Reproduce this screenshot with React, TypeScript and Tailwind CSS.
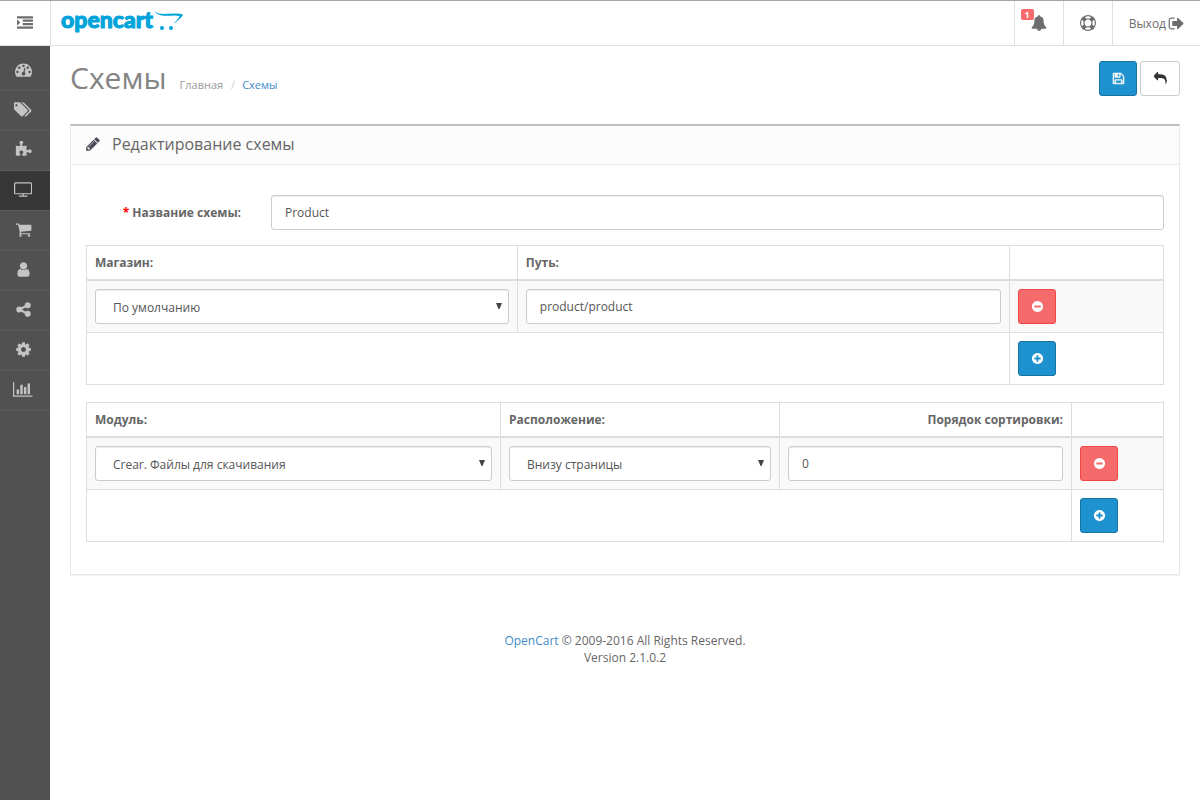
import type { ReactNode } from 'react';

interface IconProps {
  d: string;
  width?: number;
  className?: string;
}

// 14px grid icons, 1792 units to the em
function Icon({ d, width = 1792, className = '' }: IconProps) {
  return (
    <svg viewBox={`0 0 ${width} 1792`} className={`inline-block shrink-0 ${className}`} fill="currentColor" aria-hidden="true">
      <path d={d} />
    </svg>
  );
}

const icons = {
  indent:
    'M352 832q0 14-9 23l-288 288q-9 9-23 9-13 0-22.5-9.500t-9.500-22.500v-576q0-13 9.500-22.500t22.500-9.500q14 0 23 9l288 288q9 9 9 23zM1792 1312v192q0 13-9.500 22.500t-22.500 9.500h-1728q-13 0-22.500-9.500t-9.500-22.500v-192q0-13 9.500-22.500t22.500-9.500h1728q13 0 22.500 9.500t9.500 22.500zM1792 928v192q0 13-9.500 22.500t-22.500 9.500h-1088q-13 0-22.500-9.500t-9.500-22.500v-192q0-13 9.500-22.500t22.500-9.500h1088q13 0 22.500 9.500t9.500 22.500zM1792 544v192q0 13-9.500 22.500t-22.500 9.500h-1088q-13 0-22.500-9.500t-9.500-22.500v-192q0-13 9.500-22.500t22.500-9.500h1088q13 0 22.500 9.500t9.500 22.500zM1792 160v192q0 13-9.500 22.500t-22.500 9.500h-1728q-13 0-22.500-9.500t-9.500-22.500v-192q0-13 9.500-22.500t22.500-9.500h1728q13 0 22.500 9.500t9.500 22.500z',
  dashboard:
    'M384 1152q0-53-37.500-90.500t-90.500-37.500-90.500 37.500-37.500 90.500 37.500 90.500 90.500 37.500 90.500-37.500 37.500-90.500zm192-448q0-53-37.500-90.500t-90.500-37.500-90.500 37.500-37.500 90.500 37.500 90.500 90.500 37.500 90.500-37.500 37.500-90.500zm428 481l101-382q6-26-7.500-48.500t-38.500-29.500-48 6.500-30 39.500l-101 382q-60 5-107 43.500t-63 98.500q-20 77 20 146t117 89 146-20 89-117q16-60-6-117t-72-91zm660-33q0-53-37.500-90.500t-90.500-37.500-90.500 37.500-37.500 90.500 37.500 90.500 90.500 37.500 90.500-37.500 37.500-90.500zm-640-640q0-53-37.500-90.500t-90.500-37.500-90.500 37.500-37.500 90.500 37.500 90.500 90.500 37.500 90.500-37.500 37.500-90.500zm448 192q0-53-37.500-90.500t-90.500-37.500-90.500 37.500-37.500 90.500 37.500 90.500 90.500 37.500 90.500-37.500 37.500-90.500zm320 448q0 261-141 483-19 29-54 29h-1402q-35 0-54-29-141-221-141-483 0-182 71-348t191-286 286-191 348-71 348 71 286 191 191 286 71 348z',
  tags:
    'M384 448q0-53-37.500-90.500t-90.500-37.500-90.500 37.500-37.500 90.500 37.500 90.500 90.500 37.500 90.500-37.500 37.500-90.500zm1067 576q0 53-37 90l-491 492q-39 37-91 37-53 0-90-37l-715-716q-38-37-64.500-101t-26.500-117v-416q0-52 38-90t90-38h416q53 0 117 26.500t102 64.500l715 714q37 39 37 91zm384 0q0 53-37 90l-491 492q-39 37-91 37-36 0-59-14t-53-45l470-470q37-37 37-90 0-52-37-91l-715-714q-38-38-102-64.500t-117-26.500h224q53 0 117 26.500t102 64.500l715 714q37 39 37 91z',
  puzzle:
    'M1755 1083q0 81-44.500 135t-123.500 54q-41 0-77.500-17.500t-59-38-56.500-38-71-17.500q-110 0-110 124 0 39 16 115t15 115v5q-22 0-33 1-34 3-97.500 11.500t-115.500 13.500-98 5q-61 0-103-26.500t-42-83.500q0-37 17.500-71t38-56.500 38-59 17.500-77.500q0-79-54-123.500t-135-44.500q-84 0-143 45.500t-59 127.500q0 43 15 83t33.500 64.500 33.500 53 15 50.500q0 45-46 89-37 35-117 35-95 0-245-24-9-2-27.500-4t-27.500-4l-13-2q-1 0-3-1-2 0-2-1v-1024q2 1 17.500 3.500t34 5 21.500 3.500q150 24 245 24 80 0 117-35 46-44 46-89 0-22-15-50.500t-33.500-53-33.500-64.500-15-83q0-82 59-127.500t144-45.500q80 0 134 44.500t54 123.500q0 41-17.500 77.500t-38 59-38 56.500-17.500 71q0 57 42 83.500t103 26.500q64 0 180-15t163-17v2q-1 2-3.500 17.500t-5 34-3.500 21.500q-24 150-24 245 0 80 35 117 44 46 89 46 22 0 50.500-15t53-33.500 64.500-33.500 83-15q82 0 127.500 59t45.500 143z',
  television:
    'M1792 1248v-960q0-13-9.500-22.500t-22.500-9.500h-1600q-13 0-22.500 9.500t-9.500 22.500v960q0 13 9.500 22.500t22.500 9.500h1600q13 0 22.500-9.500t9.500-22.500zm128-960v960q0 66-47 113t-113 47h-736v128h352q14 0 23 9t9 23v64q0 14-9 23t-23 9h-832q-14 0-23-9t-9-23v-64q0-14 9-23t23-9h352v-128h-736q-66 0-113-47t-47-113v-960q0-66 47-113t113-47h1600q66 0 113 47t47 113z',
  cart:
    'M704 1536q0 52-38 90t-90 38-90-38-38-90 38-90 90-38 90 38 38 90zm896 0q0 52-38 90t-90 38-90-38-38-90 38-90 90-38 90 38 38 90zm128-1088v512q0 24-16.500 42.500t-40.500 21.500l-1044 122q13 60 13 70 0 16-24 64h920q26 0 45 19t19 45-19 45-45 19h-1024q-26 0-45-19t-19-45q0-11 8-31.500t16-36 21.500-40 15.500-29.500l-177-823h-204q-26 0-45-19t-19-45 19-45 45-19h256q16 0 28.500 6.500t19.500 15.500 13 24.500 8 26 5.500 29.500 4.500 26h1201q26 0 45 19t19 45z',
  user:
    'M1536 1399q0 109-62.500 187t-150.500 78h-854q-88 0-150.500-78t-62.500-187q0-85 8.500-160.500t31.500-152 58.500-131 94-89 134.500-34.500q131 128 313 128t313-128q76 0 134.500 34.500t94 89 58.500 131 31.500 152 8.500 160.500zm-256-887q0 159-112.500 271.500t-271.500 112.500-271.500-112.500-112.500-271.500 112.500-271.500 271.500-112.500 271.500 112.500 112.500 271.500z',
  share:
    'M1344 1024q133 0 226.500 93.500t93.500 226.500-93.500 226.500-226.500 93.500-226.500-93.500-93.500-226.500q0-12 2-34l-360-180q-92 86-218 86-133 0-226.500-93.500t-93.500-226.500 93.500-226.500 226.500-93.500q126 0 218 86l360-180q-2-22-2-34 0-133 93.500-226.500t226.500-93.500 226.500 93.500 93.500 226.500-93.500 226.500-226.500 93.500q-126 0-218-86l-360 180q2 22 2 34t-2 34l360 180q92-86 218-86z',
  cog:
    'M1152 896q0-106-75-181t-181-75-181 75-75 181 75 181 181 75 181-75 75-181zm512-109v222q0 12-8 23t-20 13l-185 28q-19 54-39 91 35 50 107 138 10 12 10 25t-9 23q-27 37-99 108t-94 71q-12 0-26-9l-138-108q-44 23-91 38-16 136-29 186-7 28-36 28h-222q-14 0-24.500-8.500t-11.500-21.500l-28-184q-49-16-90-37l-141 107q-10 9-25 9-14 0-25-11-126-114-165-168-7-10-7-23 0-12 8-23 15-21 51-66.500t54-70.500q-27-50-41-99l-183-27q-13-2-21-12.500t-8-23.500v-222q0-12 8-23t19-13l186-28q14-46 39-92-40-57-107-138-10-12-10-24 0-10 9-23 26-36 98.500-107.500t94.500-71.500q13 0 26 10l138 107q44-23 91-38 16-136 29-186 7-28 36-28h222q14 0 24.500 8.500t11.500 21.500l28 184q49 16 90 37l142-107q9-9 24-9 13 0 25 10 129 119 165 170 7 8 7 22 0 12-8 23-15 21-51 66.500t-54 70.500q26 50 41 98l183 28q13 2 21 12.500t8 23.500z',
  chart:
    'M640 896v512h-256v-512h256zm384-512v1024h-256v-1024h256zm1024 1152v128h-2048v-1536h128v1408h1920zm-640-896v768h-256v-768h256zm384-384v1152h-256v-1152h256z',
  bell:
    'M912 1696q0-16-16-16-59 0-101.500-42.500t-42.500-101.500q0-16-16-16t-16 16q0 73 51.500 124.500t124.500 51.500q16 0 16-16zm816-288q0 52-38 90t-90 38h-448q0 106-75 181t-181 75-181-75-75-181h-448q-52 0-90-38t-38-90q50-42 91-88t85-119.500 74.500-158.500 50-206 19.500-260q0-152 117-282.500t307-158.500q-8-19-8-39 0-40 28-68t68-28 68 28 28 68q0 20-8 39 190 28 307 158.500t117 282.500q0 139 19.500 260t50 206 74.500 158.500 85 119.500 91 88z',
  lifeRing:
    'M896 0q182 0 348 71t286 191 191 286 71 348-71 348-191 286-286 191-348 71-348-71-286-191-191-286-71-348 71-348 191-286 286-191 348-71zm0 128q-190 0-361 90l194 194q82-28 167-28t167 28l194-194q-171-90-361-90zm-678 1129l194-194q-28-82-28-167t28-167l-194-194q-90 171-90 361t90 361zm678 407q190 0 361-90l-194-194q-82 28-167 28t-167-28l-194 194q171 90 361 90zm0-384q159 0 271.500-112.500t112.500-271.500-112.500-271.500-271.500-112.500-271.500 112.500-112.500 271.500 112.500 271.500 271.500 112.500zm484-217l194 194q90-171 90-361t-90-361l-194 194q28 82 28 167t-28 167z',
  signOut:
    'M704 1440q0 4 1 20t.5 26.500-3 23.500-10 19.500-20.500 6.500h-320q-119 0-203.500-84.500t-84.500-203.500v-704q0-119 84.500-203.500t203.500-84.500h320q13 0 22.500 9.500t9.500 22.500q0 4 1 20t.5 26.500-3 23.500-10 19.500-20.500 6.500h-320q-66 0-113 47t-47 113v704q0 66 47 113t113 47h312l11.500 1 11.500 3 8 5.500 7 9 2 13.500zm928-544q0 26-19 45l-544 544q-19 19-45 19t-45-19-19-45v-288h-448q-26 0-45-19t-19-45v-384q0-26 19-45t45-19h448v-288q0-26 19-45t45-19 45 19l544 544q19 19 19 45z',
  save:
    'M512 1536h768v-384h-768v384zm896 0h128v-896q0-14-10-38.500t-20-34.500l-281-281q-10-10-34-20t-39-10v416q0 40-28 68t-68 28h-576q-40 0-68-28t-28-68v-416h-128v1280h128v-416q0-40 28-68t68-28h832q40 0 68 28t28 68v416zm-384-928v-320q0-13-9.500-22.500t-22.500-9.500h-192q-13 0-22.500 9.500t-9.500 22.500v320q0 13 9.500 22.500t22.500 9.500h192q13 0 22.500-9.500t9.500-22.500zm640 32v928q0 40-28 68t-68 28h-1344q-40 0-68-28t-28-68v-1344q0-40 28-68t68-28h928q40 0 88 20t76 48l280 280q28 28 48 76t20 88z',
  reply:
    'M1792 1120q0 166-127 451-3 7-10.500 24t-13.500 30-13 22q-12 17-28 17-15 0-23.500-10t-8.500-25q0-9 2.500-26.500t2.500-23.500q5-68 5-123 0-112-19.500-200.500t-54-153.500-89-112-117.500-78-146.500-49-169.500-25.500-191-7.500h-224v256q0 26-19 45t-45 19-45-19l-512-512q-19-19-19-45t19-45l512-512q19-19 45-19t45 19 19 45v256h224q713 0 875 403 53 134 53 333z',
  pencil:
    'M491 1536l91-91-235-235-91 91v107h128v128h107zm523-928q0-22-22-22-10 0-17 7l-542 542q-7 7-7 17 0 22 22 22 10 0 17-7l542-542q7-7 7-17zm-54-192l416 416-832 832h-416v-416zm683 96q0 53-37 90l-166 166-416-416 166-165q36-38 90-38 53 0 91 38l235 234q37 39 37 91z',
  minus:
    'M1344 960v-128q0-26-19-45t-45-19h-768q-26 0-45 19t-19 45v128q0 26 19 45t45 19h768q26 0 45-19t19-45zm320-64q0 209-103 385.500t-279.500 279.500-385.500 103-385.500-103-279.500-279.500-103-385.500 103-385.500 279.500-279.500 385.500-103 385.500 103 279.500 279.500 103 385.500z',
  plus:
    'M1344 960v-128q0-26-19-45t-45-19h-256v-256q0-26-19-45t-45-19h-128q-26 0-45 19t-19 45v256h-256q-26 0-45 19t-19 45v128q0 26 19 45t45 19h256v256q0 26 19 45t45 19h128q26 0 45-19t19-45v-256h256q26 0 45-19t19-45zm320-64q0 209-103 385.500t-279.500 279.500-385.500 103-385.500-103-279.500-279.500-103-385.500 103-385.500 279.500-279.500 385.500-103 385.500 103 279.500 279.500 103 385.500z',
};

const menu = [
  { label: 'Панель состояния', d: icons.dashboard, width: 1792 },
  { label: 'Каталог', d: icons.tags, width: 1920 },
  { label: 'Дополнения', d: icons.puzzle, width: 1792 },
  { label: 'Дизайн', d: icons.television, width: 1920, active: true },
  { label: 'Продажи', d: icons.cart, width: 1792 },
  { label: 'Покупатели', d: icons.user, width: 1792 },
  { label: 'Маркетинг', d: icons.share, width: 1792 },
  { label: 'Система', d: icons.cog, width: 1792 },
  { label: 'Отчёты', d: icons.chart, width: 2048 },
];

const control =
  'block h-[35px] w-full rounded-[3px] border border-[#ccc] bg-white text-xs text-[#555] shadow-[inset_0_1px_1px_rgba(0,0,0,0.075)] outline-none focus:border-[#66afe9]';

function TextInput({ id, label, value }: { id: string; label?: string; value: string }) {
  return <input id={id} type="text" aria-label={label} defaultValue={value} className={`${control} px-[13px]`} />;
}

function Select({ label, value }: { label: string; value: string }) {
  return (
    <div className="relative">
      <select aria-label={label} className={`${control} appearance-none pt-[2px] pl-[17px] pr-6`}>
        <option>{value}</option>
      </select>
      <svg viewBox="0 0 6 6" className="pointer-events-none absolute top-[14px] right-[7px] size-[6px]" fill="#444" aria-hidden="true">
        <path d="M0 0h6L3.500 6h-1z" />
      </svg>
    </div>
  );
}

function ActionButton({ variant, label }: { variant: 'add' | 'remove'; label: string }) {
  const variants = {
    add: 'border-[#1872a2] bg-[#1e91cf] hover:bg-[#1978ab]',
    remove: 'border-[#f24545] bg-[#f56b6b] hover:bg-[#f23b3b]',
  };

  return (
    <button
      type="button"
      aria-label={label}
      className={`flex h-[35px] w-[38px] items-center justify-center rounded-[3px] border text-white ${variants[variant]}`}
    >
      <Icon d={variant === 'add' ? icons.plus : icons.minus} className="size-[13px]" />
    </button>
  );
}

function Th({ children, className = '' }: { children?: ReactNode; className?: string }) {
  return <th className={`border border-b-2 border-[#ddd] p-2 font-bold ${className}`}>{children}</th>;
}

function Td({ children, colSpan }: { children?: ReactNode; colSpan?: number }) {
  return (
    <td colSpan={colSpan} className="border border-[#ddd] p-2">
      {children}
    </td>
  );
}

function Header() {
  return (
    <header className="flex h-[46px] border-t border-b border-t-[#a5a5a5] border-b-[#e1e1e1] bg-white text-[#6d6d6d]">
      <button type="button" aria-label="Меню" className="flex w-[51px] items-center justify-center border-r border-[#e1e1e1]">
        <Icon d={icons.indent} className="size-4" />
      </button>
      <a href="#" className="flex items-start pl-[10px] text-[#00a4db]">
        <span className="pt-1 font-['Lato'] text-[23px] leading-[28px] font-black [-webkit-text-stroke:1px_#00a4db]">opencart</span>
        <svg viewBox="0 0 28 20" className="mt-[10px] ml-[2px] h-5 w-7" fill="currentColor" aria-hidden="true">
          <path d="M0 0.500C3 3 7 3 12 2.800C18 2.500 23 1.800 28 3.500C27 6.500 23 9.500 18.500 13C21 9.500 24 7.500 24.500 5.200C21 3.800 16 5 11 4.800C6 4.700 1.500 3.800 0 0.500z" />
          <circle cx="7" cy="17" r="2" />
          <circle cx="16" cy="17" r="2" />
        </svg>
      </a>
      <nav className="ml-auto flex">
        <button type="button" aria-label="Уведомления" className="relative flex w-[49px] items-center justify-center border-l border-[#e1e1e1]">
          <Icon d={icons.bell} className="size-4" />
          <span className="absolute top-2 left-[6px] flex h-[11px] w-[13px] items-center justify-center rounded-[2px] bg-[#f56b6b] text-[9px] leading-none font-bold text-white">
            1
          </span>
        </button>
        <button type="button" aria-label="Помощь" className="flex w-[49px] items-center justify-center border-l border-[#e1e1e1]">
          <Icon d={icons.lifeRing} className="size-4" />
        </button>
        <a href="#" className="flex items-center border-l border-[#e1e1e1] pr-[15px] pl-4">
          Выход
          <Icon d={icons.signOut} className="ml-[2px] size-[17px]" />
        </a>
      </nav>
    </header>
  );
}

function Sidebar() {
  return (
    <nav className="w-[50px] shrink-0 bg-[#515151] pt-[5px]">
      <ul>
        {menu.map((item) => (
          <li key={item.label} className="border-b border-[#5b5b5b]">
            <a
              href="#"
              aria-label={item.label}
              className={`flex h-[39px] items-center justify-center pr-1 pb-[2px] text-[#c4c4c4] ${item.active ? 'bg-[#373737]' : 'hover:bg-[#444]'}`}
            >
              <Icon d={item.d} width={item.width} className="h-[17px]" />
            </a>
          </li>
        ))}
      </ul>
    </nav>
  );
}

export default function App() {
  return (
    <div className="flex min-h-screen flex-col bg-white font-['Open_Sans',sans-serif] text-xs leading-[17px] text-[#666]">
      <Header />
      <div className="flex flex-1">
        <Sidebar />
        <div className="min-w-0 flex-1 px-5 pt-[15px]">
          {/* Page header */}
          <div className="flex items-start justify-between">
            <div className="flex items-baseline">
              <h1 className="text-[30px] leading-[34px] font-normal text-[#848484]">Схемы</h1>
              <ul className="ml-[13px] flex text-[11px] text-[#999]">
                <li>
                  <a href="#">Главная</a>
                </li>
                <li className="pr-[7px] pl-2 text-[#ccc]">/</li>
                <li>
                  <a href="#" className="text-[#428bca]">Схемы</a>
                </li>
              </ul>
            </div>
            <div className="flex gap-[3px]">
              <button
                type="submit"
                form="form-layout"
                aria-label="Сохранить"
                className="flex h-[35px] w-[38px] items-center justify-center rounded-[3px] border border-[#1872a2] bg-[#1e91cf] text-white"
              >
                <Icon d={icons.save} className="size-[13px] stroke-white stroke-[60px]" />
              </button>
              <a href="#" aria-label="Отменить" className="flex h-[35px] w-10 items-center justify-center rounded-[3px] border border-[#ccc] bg-white text-[#333]">
                <Icon d={icons.reply} className="size-[13px]" />
              </a>
            </div>
          </div>

          {/* Layout form */}
          <main className="mt-7 border border-t-2 border-[#e8e8e8] border-t-[#bfbfbf] shadow-[0_1px_1px_rgba(0,0,0,0.05)]">
            <div className="flex h-[39px] items-center border-b border-[#e8e8e8] bg-[#fcfcfc] pb-[2px] pl-[14px] text-[#4c4d5a]">
              <Icon d={icons.pencil} className="size-4" />
              <h2 className="ml-[11px] text-base leading-[18px] font-normal text-[#666]">Редактирование схемы</h2>
            </div>
            <form id="form-layout" className="p-[15px] pb-8" onSubmit={(e) => e.preventDefault()}>
              <div className="flex items-center py-[15px]">
                <label htmlFor="input-name" className="w-[185px] shrink-0 pr-[30px] text-right font-bold">
                  <span className="text-[#f00]">*</span> Название схемы:
                </label>
                <TextInput id="input-name" value="Product" />
              </div>

              <table className="mb-[17px] w-full table-fixed border-collapse text-left">
                <thead>
                  <tr>
                    <Th className="w-[40%]">Магазин:</Th>
                    <Th>Путь:</Th>
                    <Th className="w-[154px]" />
                  </tr>
                </thead>
                <tbody>
                  <tr className="bg-[#f9f9f9]">
                    <Td><Select label="Магазин" value="По умолчанию" /></Td>
                    <Td><TextInput id="input-route" label="Путь" value="product/product" /></Td>
                    <Td><ActionButton variant="remove" label="Удалить" /></Td>
                  </tr>
                </tbody>
                <tfoot>
                  <tr>
                    <Td colSpan={2} />
                    <Td><ActionButton variant="add" label="Добавить путь" /></Td>
                  </tr>
                </tfoot>
              </table>

              <table className="w-full table-fixed border-collapse text-left">
                <thead>
                  <tr>
                    <Th>Модуль:</Th>
                    <Th className="w-[279px]">Расположение:</Th>
                    <Th className="w-[292px] text-right">Порядок сортировки:</Th>
                    <Th className="w-[92px]" />
                  </tr>
                </thead>
                <tbody>
                  <tr className="bg-[#f9f9f9]">
                    <Td><Select label="Модуль" value="Crear. Файлы для скачивания" /></Td>
                    <Td><Select label="Расположение" value="Внизу страницы" /></Td>
                    <Td><TextInput id="input-sort-order" label="Порядок сортировки" value="0" /></Td>
                    <Td><ActionButton variant="remove" label="Удалить" /></Td>
                  </tr>
                </tbody>
                <tfoot>
                  <tr>
                    <Td colSpan={3} />
                    <Td><ActionButton variant="add" label="Добавить модуль" /></Td>
                  </tr>
                </tfoot>
              </table>
            </form>
          </main>

          <footer className="py-[57px] text-center">
            <a href="#" className="text-[#428bca]">OpenCart</a> © 2009-2016 All Rights Reserved.
            <br />
            Version 2.1.0.2
          </footer>
        </div>
      </div>
    </div>
  );
}
